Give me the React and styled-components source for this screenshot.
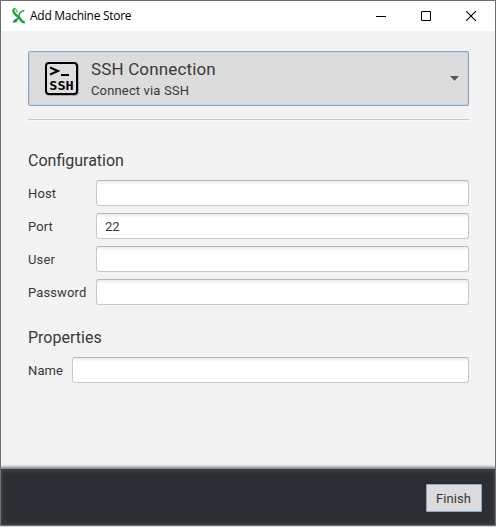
import React from "react";
import styled, { createGlobalStyle } from "styled-components";

const GlobalStyle = createGlobalStyle`
  * { box-sizing: border-box; }
  body { margin: 0; background: #d9d9d9; }
`;

const Window = styled.div`
  width: 496px;
  height: 526px;
  display: flex;
  flex-direction: column;
  border: 1px solid #6e6e70;
  background: #f3f3f3;
  color: #383838;
  font: 13px/16px Roboto, sans-serif;
`;

const TitleBar = styled.header`
  height: 30px;
  flex: none;
  display: flex;
  align-items: center;
  padding: 0 2px 0 11px;
  background: #fff;
  color: #000;
`;

const Title = styled.span`
  flex: 1;
  margin-left: 3px;
  font: 12px/16px "Open Sans", "Noto Sans", sans-serif;
  letter-spacing: -0.27px;
`;

const WindowButton = styled.button`
  width: 45px;
  height: 30px;
  padding: 0 0 1px;
  border: 0;
  background: none;
  svg { display: block; margin: 0 auto; }
`;

const Content = styled.main`
  flex: 1;
  padding: 20px 26px 0 27px;
`;

const Provider = styled.button`
  width: 441px;
  height: 55px;
  display: flex;
  align-items: center;
  padding: 0 9px 0 15px;
  border: 1px solid #8aa3bd;
  border-radius: 2px;
  background: #dcdcdc;
  box-shadow: inset 0 0 0 1px #ced4da;
  color: #383838;
  font: inherit;
  text-align: left;
`;

const ProviderText = styled.span`
  flex: 1;
  display: flex;
  flex-direction: column;
  margin-left: 12px;
  padding-top: 2px;
`;

const ProviderName = styled.span`
  font-size: 17px;
  line-height: 21px;
  letter-spacing: 0.15px;
`;

const ProviderHint = styled.span`
  line-height: 21px;
  letter-spacing: 0.15px;
`;

const Divider = styled.hr`
  height: 2px;
  margin: 13px 0 0;
  border: 0;
  border-top: 1px solid #c8c8c8;
  background: #fbfbfb;
`;

const Section = styled.section`
  margin-top: ${(p) => p.$gap}px;
`;

const Heading = styled.h2`
  margin: 0 0 9px;
  font-size: 16px;
  font-weight: 400;
  line-height: 20px;
`;

const Fields = styled.div`
  display: grid;
  grid-template-columns: ${(p) => p.$label}px 1fr;
  row-gap: 7px;
  align-items: center;
`;

const Label = styled.label`
  height: 26px;
  line-height: 28px;
  letter-spacing: 0.12px;
`;

const Input = styled.input`
  width: 100%;
  height: 26px;
  padding: 0 8px;
  border: 1px solid #c8c8c8;
  border-top-color: #b7b7b7;
  border-radius: 3px;
  outline: 0;
  background: linear-gradient(#ededed, #fff 4px);
  color: #383838;
  font: 13px Roboto, sans-serif;
`;

const Footer = styled.footer`
  height: 56px;
  flex: none;
  display: flex;
  align-items: center;
  justify-content: flex-end;
  padding: 1px 13px 0 0;
  border-top: 1px solid #24405b;
  background: #2b2e32;
  box-shadow: 0 -1px 3px 1px #777, inset 0 0 4px 1px #44474a;
`;

const FinishButton = styled.button`
  width: 56px;
  height: 28px;
  padding: 0 1px 0 0;
  border: 1px solid #8ba9cd;
  border-radius: 1px;
  background: #dcdcdc;
  color: #383838;
  font: 13px Roboto, sans-serif;
  letter-spacing: 0.1px;
`;

const Logo = () => (
  <svg width="15" height="18" viewBox="0 0 15 18" fill="none">
    <path d="M.8 15.8 C1.3 13.4 4 11.4 6.4 10.8 L4.6 15Z" fill="#244e94" />
    <path d="M12.3 3.5 C9 4 7.2 6.5 7 9 C6 12 4.5 14.3 2 14.9" stroke="#1f9e3c" strokeWidth="1.4" />
    <path d="M1.6 2.2 C.6 6 4 8 6.3 9.8 C9.4 12.5 9 15.5 12.8 15.2" stroke="#13aa26" strokeWidth="2.4" />
    <path d="M1.4 2.4 C3 -.2 4.6 3 5.2 5.4" stroke="#3db549" strokeWidth="1.2" />
  </svg>
);

const SshIcon = () => (
  <svg width="35" height="35" viewBox="0 0 35 35">
    <rect x="3" y="3" width="31" height="31" rx="3" fill="none" stroke="#aaa" strokeWidth="2" />
    <rect x="2" y="2" width="31" height="31" rx="3" fill="#dfdfdf" stroke="#000" strokeWidth="2" />
    <path d="M6 6.5 L14 10 L6 13.5 M17 14 H25" fill="none" stroke="#000" strokeWidth="2" />
    <text x="5.3" y="29" textLength="24.4" lengthAdjust="spacingAndGlyphs" fontFamily="DejaVu Sans Mono, monospace" fontWeight="700" fontSize="12.5">SSH</text>
  </svg>
);

const CONFIG = [
  ["Host", ""],
  ["Port", "22"],
  ["User", ""],
  ["Password", ""],
];

function FieldGroup({ title, fields, label, gap }) {
  return (
    <Section $gap={gap}>
      <Heading>{title}</Heading>
      <Fields $label={label}>
        {fields.map(([name, value]) => (
          <React.Fragment key={name}>
            <Label htmlFor={name}>{name}</Label>
            <Input id={name} defaultValue={value} />
          </React.Fragment>
        ))}
      </Fields>
    </Section>
  );
}

export default function App() {
  return (
    <>
      <GlobalStyle />
      <Window>
        <TitleBar>
          <Logo />
          <Title>Add Machine Store</Title>
          <WindowButton aria-label="Minimize">
            <svg width="10" height="10"><path d="M0 5.5H10" stroke="#000" /></svg>
          </WindowButton>
          <WindowButton aria-label="Maximize">
            <svg width="10" height="10"><path d="M.5 .5H9.5V9.5H.5Z" fill="none" stroke="#000" /></svg>
          </WindowButton>
          <WindowButton aria-label="Close">
            <svg width="10" height="10"><path d="M0 0L10 10M10 0L0 10" stroke="#000" strokeWidth="1.1" /></svg>
          </WindowButton>
        </TitleBar>
        <Content>
          <Provider>
            <SshIcon />
            <ProviderText>
              <ProviderName>SSH Connection</ProviderName>
              <ProviderHint>Connect via SSH</ProviderHint>
            </ProviderText>
            <svg width="9" height="6"><path d="M0 1H9L4.5 6Z" fill="#eee" /><path d="M0 0H9L4.5 5Z" fill="#555" /></svg>
          </Provider>
          <Divider />
          <FieldGroup title="Configuration" fields={CONFIG} label={68} gap={30} />
          <FieldGroup title="Properties" fields={[["Name", ""]]} label={44} gap={23} />
        </Content>
        <Footer>
          <FinishButton>Finish</FinishButton>
        </Footer>
      </Window>
    </>
  );
}
